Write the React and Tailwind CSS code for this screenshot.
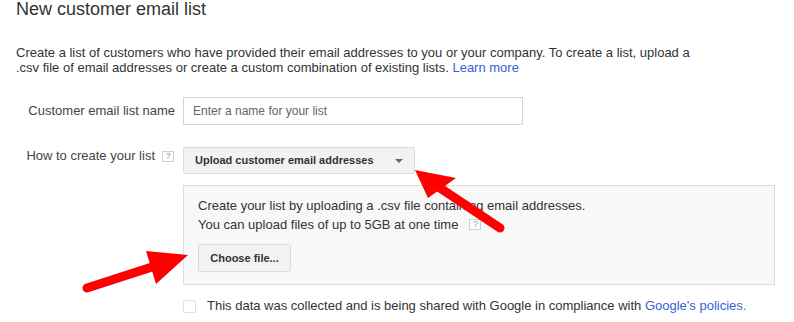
import React from 'react';

const HelpIcon = () => (
  <span className="inline-flex h-[11px] w-[12px] items-center justify-center border border-[#cfcfcf] bg-white text-[9px] leading-none text-[#999]">
    ?
  </span>
);

const App = () => {
  return (
    <div className="relative h-[322px] w-[794px] overflow-hidden bg-white pl-4 font-['Liberation_Sans',Arial,sans-serif] text-[#333]">
      {/* Heading */}
      <h1 className="text-[18px] leading-[18px] text-[#333]">New customer email list</h1>

      {/* Intro */}
      <p className="mt-[27px] text-[13px] leading-[15px] text-[#333]">
        Create a list of customers who have provided their email addresses to you or your company. To create a list, upload a
        <br />
        .csv file of email addresses or create a custom combination of existing lists.{' '}
        <a className="text-[#3b5fd4]">Learn more</a>
      </p>

      {/* List name */}
      <div className="mt-[22px] flex items-center">
        <label className="w-[159px] text-right text-[13px] leading-4 text-[#444]">Customer email list name</label>
        <input
          placeholder="Enter a name for your list"
          className="ml-2 h-[28px] w-[340px] border border-[#d4d4d4] bg-white pl-[9px] text-[12px] text-[#333] outline-none placeholder:text-[#666]"
        />
      </div>

      {/* How to create */}
      <div className="mt-[22px] flex items-start">
        <div className="flex w-[159px] items-center justify-end gap-[7px] pr-px pt-px">
          <span className="text-[13px] leading-4 text-[#444]">How to create your list</span>
          <HelpIcon />
        </div>
        <button className="ml-[8px] flex h-[27px] w-[232px] items-center justify-between rounded-[2px] border border-[#dcdcdc] bg-[#f2f2f2] pl-[11px] pr-[11px] text-[11px] font-bold text-[#333]">
          <span>Upload customer email addresses</span>
          <svg width="8" height="4" viewBox="0 0 8 4">
            <polygon points="0,0 8,0 4,4" fill="#666" />
          </svg>
        </button>
      </div>

      {/* Upload panel */}
      <div className="ml-[167px] mt-[11px] h-[100px] w-[592px] border border-[#dcdcdc] bg-[#f8f8f8] pl-[14px] pt-[10px]">
        <p className="text-[13px] leading-[19px] text-[#333]">Create your list by uploading a .csv file containing email addresses.</p>
        <p className="flex items-center gap-[11px] text-[13px] leading-[19px] text-[#333]">
          You can upload files of up to 5GB at one time <HelpIcon />
        </p>
        <button className="mt-[10px] h-[28px] w-[93px] rounded-[2px] border border-[#dcdcdc] bg-[#f2f2f2] text-[11px] font-bold text-[#333]">
          Choose file...
        </button>
      </div>

      {/* Consent */}
      <div className="ml-[167px] mt-[13px] flex items-center">
        <span className="h-[13px] w-[13px] rounded-[2px] border border-[#e0e0e0] bg-white" />
        <span className="ml-[11px] text-[13px] leading-4 text-[#333]">
          This data was collected and is being shared with Google in compliance with{' '}
          <a className="text-[#3b5fd4]">Google's policies.</a>
        </span>
      </div>

      {/* Red annotation arrows */}
      <svg className="pointer-events-none absolute inset-0" width="794" height="322">
        <line x1="500" y1="228" x2="440" y2="188" stroke="#ff0000" strokeWidth="9" strokeLinecap="round" />
        <polygon points="415,170 456,178 428,198" fill="#ff0000" />
        <line x1="87" y1="288" x2="152" y2="267" stroke="#ff0000" strokeWidth="9" strokeLinecap="round" />
        <polygon points="188,255 146,251 156,284" fill="#ff0000" />
      </svg>
    </div>
  );
};

export default App;
